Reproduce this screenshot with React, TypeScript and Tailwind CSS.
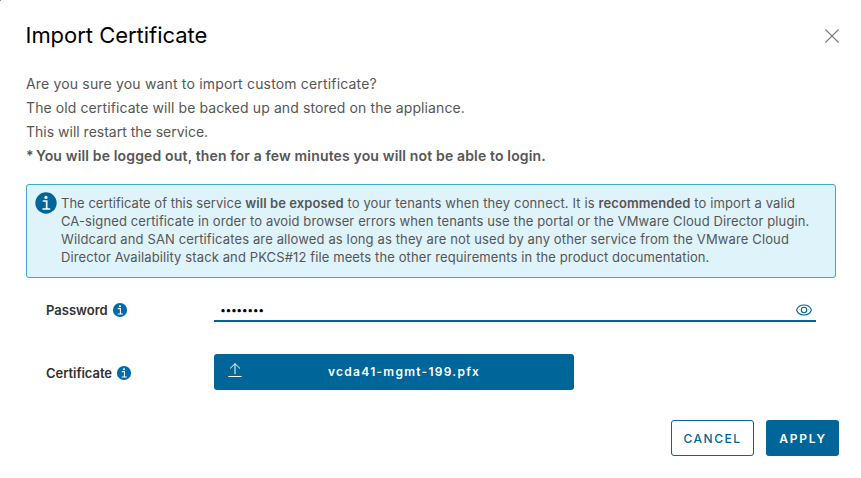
function InfoSolid({ className }: { className: string }) {
  return (
    <svg viewBox="0 0 36 36" className={className} aria-hidden="true">
      <circle cx="18" cy="18" r="16" fill="currentColor" />
      <circle cx="17.9" cy="9.600" r="2.4" fill="#fff" />
      <path d="M14 15h5v11.600M13.600 27h9.800" fill="none" stroke="#fff" strokeWidth="2.500" strokeLinecap="round" />
    </svg>
  );
}

function CloseIcon() {
  return (
    <svg viewBox="0 0 14 14" className="size-[14px] text-[#737373]" aria-hidden="true">
      <path d="M0.8 0.8 13.2 13.2M13.2 0.8 0.8 13.2" stroke="currentColor" strokeWidth="1.2" strokeLinecap="round" />
    </svg>
  );
}

function EyeIcon() {
  return (
    <svg viewBox="0 0 16 12" className="mt-[2px] h-[12px] w-[16px] text-[#006599]" fill="none" stroke="currentColor" strokeWidth="1.1" aria-hidden="true">
      <path d="M0.600 6C1.800 2.600 4.800 1 8 1s6.200 1.600 7.400 5C14.200 9.400 11.200 11 8 11S1.800 9.400 0.600 6Z" />
      <circle cx="8" cy="6" r="2.700" />
    </svg>
  );
}

function UploadIcon() {
  return (
    <svg viewBox="0 0 14 14" className="h-[14px] w-[14px]" fill="none" stroke="currentColor" strokeWidth="1" strokeLinecap="round" aria-hidden="true">
      <path d="M2.300 5.200 7 0.700l4.700 4.500M7 1v9.800M0.700 13.500h12.600" />
    </svg>
  );
}

export default function App() {
  return (
    <div className="relative h-[478px] w-[861px] overflow-hidden bg-white font-['Inter',sans-serif] text-[#565656]">
      <span className="absolute top-0 left-0 size-px bg-[#8a8a8a]" />
      <header className="flex h-[72px] items-center justify-between pr-[22px] pl-[25.500px]">
        <h1 className="-mt-[2px] whitespace-nowrap text-[22px] leading-[24px] tracking-[-0.03px] text-black">Import Certificate</h1>
        <button type="button" aria-label="Close">
          <CloseIcon />
        </button>
      </header>

      <div className="pl-[26px] whitespace-nowrap text-[14px] leading-[24px]">
        <p className="tracking-[0.17px]">Are you sure you want to import custom certificate?</p>
        <p className="tracking-[0.1px]">The old certificate will be backed up and stored on the appliance.</p>
        <p>This will restart the service.</p>
        <p className="font-semibold tracking-[0.155px]">
          <span className="tracking-[-0.6px]">* </span>You will be logged out, then for a few minutes you will not be able to login.
        </p>
      </div>

      <div className="mt-[16px] ml-[26px] flex h-[94px] w-[810px] rounded-[3px] border border-[#3fa5d4] bg-[#dff3fa] pt-[9px] pl-[7px]">
        <InfoSolid className="-mt-[3px] size-[24px] shrink-0 text-[#006599]" />
        <div className="ml-[3px] whitespace-nowrap text-[13px] leading-[18px]">
          <p className="tracking-[0.135px]">
            <span className="tracking-[0.02px]">The certificate of this service </span>
            <b className="font-semibold tracking-[0.08px]">will be exposed</b> to your tenants when they connect. It is{" "}
            <b className="font-semibold tracking-[0.07px]">recommended</b> to import a valid
          </p>
          <p className="tracking-[0.118px]">
            CA-signed certificate in order to avoid browser errors when tenants use the portal or the VMware Cloud Director plugin.
          </p>
          <p className="tracking-[0.127px]">
            Wildcard and SAN certificates are allowed as long as they are not used by any other service from the VMware Cloud
          </p>
          <p className="tracking-[0.115px]">
            Director Availability stack and PKCS#12 file meets the other requirements in the product documentation.
          </p>
        </div>
      </div>

      <div className="mt-[20px] ml-[46px] flex h-[24px] w-[770px]">
        <div className="flex w-[168px] items-center">
          <span className="text-[13px] leading-[18px] font-semibold text-[#313131]">Password</span>
          <InfoSolid className="ml-[4px] size-[16px] text-[#006bab]" />
        </div>
        <div className="flex h-[24px] flex-1 items-center justify-between border-b-2 border-[#006599] pr-[4px] pl-[6px]">
          <span className="mt-[4px] text-[10.500px] leading-[12px] tracking-[-0.450px] text-black">••••••••</span>
          <EyeIcon />
        </div>
      </div>

      <div className="mt-[32px] ml-[46px] flex h-[36px] items-center">
        <div className="flex w-[168px] items-center pt-[2px]">
          <span className="text-[13px] leading-[18px] font-semibold tracking-[-0.05px] text-[#313131]">Certificate</span>
          <InfoSolid className="ml-[4px] size-[16px] text-[#006bab]" />
        </div>
        <button type="button" className="flex h-[36px] w-[360px] items-center rounded-[3px] bg-[#006599] pl-[14px] text-white">
          <span className="-mt-[4px]">
            <UploadIcon />
          </span>
          <span className="ml-[86px] text-[12px] leading-[16px] font-semibold tracking-[1.27px]">vcda41-mgmt-199.pfx</span>
        </button>
      </div>

      <footer className="mt-[30px] flex justify-end gap-[12px] pr-[22px]">
        <button type="button" className="h-[36px] w-[83px] rounded-[3px] border border-[#006599] pt-[2px] text-[12px] font-medium tracking-[1.5px] text-[#006599]">
          CANCEL
        </button>
        <button type="button" className="h-[36px] w-[73px] rounded-[3px] bg-[#006599] pt-[2px] pl-px text-[12px] font-semibold tracking-[1.8px] text-white">
          APPLY
        </button>
      </footer>
    </div>
  );
}
